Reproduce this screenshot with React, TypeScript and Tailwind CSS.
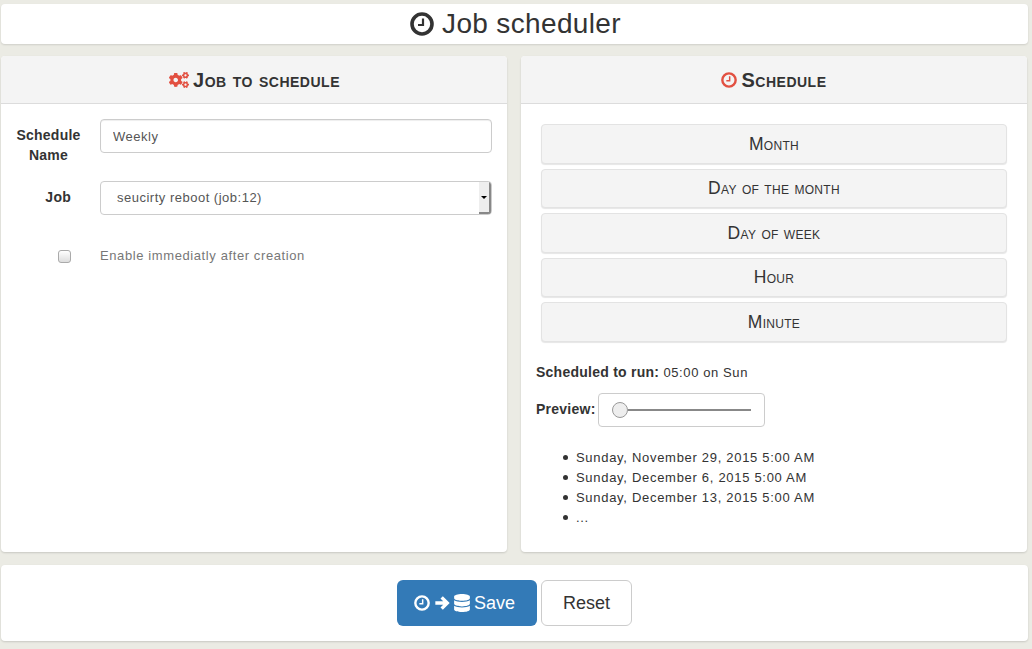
import { FaCogs, FaDatabase } from 'react-icons/fa';

const FONT = "font-['Liberation_Sans',Arial,sans-serif]";

const scheduleFields = ['Month', 'Day of the month', 'Day of week', 'Hour', 'Minute'];

const previewDates = [
  'Sunday, November 29, 2015 5:00 AM',
  'Sunday, December 6, 2015 5:00 AM',
  'Sunday, December 13, 2015 5:00 AM',
  '...',
];

function ClockIcon({ className }: { className?: string }) {
  return (
    <svg viewBox="0 0 24 24" className={className} fill="none" stroke="currentColor" aria-hidden>
      <circle cx="12" cy="12" r="10" strokeWidth="3.6" />
      <path d="M13 6.5V13H8" strokeWidth="2.2" />
    </svg>
  );
}

function ArrowIcon({ className }: { className?: string }) {
  return (
    <svg viewBox="0 0 24 24" className={className} fill="none" stroke="currentColor" aria-hidden>
      <path d="M2 12H20M11.5 3.5L20 12L11.5 20.5" strokeWidth="5" />
    </svg>
  );
}

function PanelHeader({ icon, title }: { icon: React.ReactNode; title: string }) {
  return (
    <div className="flex h-[48px] items-center justify-center gap-[4px] rounded-t-[4px] border-b border-[#dcdcdc] bg-[#f4f4f4] text-[20px] font-bold text-[#333] [font-variant-caps:small-caps]">
      {icon}
      <span>{title}</span>
    </div>
  );
}

export default function App() {
  return (
    <div
      className={`${FONT} h-[649px] w-[1032px] overflow-hidden bg-[#ebebe4] pt-[4px] pr-[4px] pl-[1px] text-[13px] tracking-[0.5px] text-[#333]`}
    >
      <div className="flex h-[40px] items-center justify-center gap-[8px] rounded-[4px] bg-white pl-[2px] text-[28px] font-normal tracking-[0.35px] shadow-[0_1px_2px_rgba(0,0,0,0.12)]">
        <ClockIcon className="h-[24px] w-[24px] text-[#333]" />
        <span>Job scheduler</span>
      </div>

      <div className="mt-[12px] flex h-[496px] gap-[14px]">
        <section className="flex w-[506px] flex-col rounded-[4px] bg-white shadow-[0_1px_2px_rgba(0,0,0,0.15)]">
          <PanelHeader
            icon={<FaCogs className="ml-[1px] h-[20px] w-[20px] text-[#e25041]" />}
            title="Job to schedule"
          />
          <div className="flex gap-[12px] pt-[15px] pl-[8px]">
            <label className="w-[79px] pt-[6px] text-center text-[14px] leading-[20px] font-bold tracking-[0.25px]">
              <span className="block">Schedule</span>
              <span className="block">Name</span>
            </label>
            <input
              readOnly
              value="Weekly"
              className="h-[34px] w-[392px] rounded-[4px] border border-[#ccc] px-[12px] text-[13px] text-[#555] shadow-[inset_0_1px_1px_rgba(0,0,0,0.07)] outline-none"
            />
          </div>
          <div className="flex items-start gap-[20px] pt-[16px]">
            <label className="w-[70px] pt-[6px] text-right text-[14px] leading-[20px] font-bold tracking-[0.25px]">
              Job
            </label>
            <div className="ml-[9px] flex h-[34px] w-[392px] items-center overflow-hidden rounded-[4px] border border-[#ccc] pl-[16px] text-[13px] text-[#555]">
              <span className="flex-1">seucirty reboot (job:12)</span>
              <span className="flex h-full w-[12px] items-center justify-center border-r-2 border-b-2 border-[#888] bg-[#eee]">
                <span className="h-0 w-0 border-x-[3px] border-t-[3px] border-x-transparent border-t-black" />
              </span>
            </div>
          </div>
          <div className="flex items-center gap-[29px] pt-[31px] pl-[57px]">
            <input
              type="checkbox"
              readOnly
              className="h-[13px] w-[13px] appearance-none rounded-[3px] border border-[#aaa] bg-[linear-gradient(#fff,#ddd)]"
            />
            <span className="text-[13px] leading-[20px] tracking-[0.6px] text-[#777]">
              Enable immediatly after creation
            </span>
          </div>
        </section>

        <section className="flex w-[506px] flex-col rounded-[4px] bg-white shadow-[0_1px_2px_rgba(0,0,0,0.15)]">
          <PanelHeader
            icon={<ClockIcon className="h-[16px] w-[16px] text-[#e25041]" />}
            title="Schedule"
          />
          <div className="flex flex-col gap-[5px] px-[20px] pt-[20px]">
            {scheduleFields.map((field) => (
              <div
                key={field}
                className="flex h-[39.5px] items-center justify-center rounded-[4px] border border-[#e3e3e3] bg-[#f4f4f4] text-[17.5px] tracking-[0.3px] text-[#333] shadow-[0_1px_1px_rgba(0,0,0,0.1)] [font-variant-caps:small-caps]"
              >
                {field}
              </div>
            ))}
          </div>
          <p className="mt-[20px] pl-[15px] text-[13px] leading-[20px] tracking-[0.6px]">
            <b className="text-[14px] tracking-[0.25px]">Scheduled to run:</b> 05:00 on Sun
          </p>
          <div className="mt-[10px] flex items-center gap-[2px] pl-[15px]">
            <b className="text-[14px] tracking-[0.25px]">Preview:</b>
            <div className="flex h-[34px] w-[167px] items-center rounded-[4px] border border-[#ccc] px-[13px]">
              <span className="h-[16px] w-[16px] shrink-0 rounded-full border border-[#999] bg-[#eee]" />
              <span className="h-[2px] flex-1 bg-[#888]" />
            </div>
          </div>
          <ul className="mt-[21px] pl-[42px] text-[13px] leading-[20px] tracking-[0.7px]">
            {previewDates.map((date) => (
              <li key={date} className="flex items-center gap-[8px]">
                <span className="h-[5px] w-[5px] rounded-full bg-[#333]" />
                <span>{date}</span>
              </li>
            ))}
          </ul>
        </section>
      </div>

      <div className="mt-[13px] flex h-[76px] items-center justify-center gap-[4px] rounded-[4px] bg-white shadow-[0_1px_2px_rgba(0,0,0,0.15)]">
        <button
          type="button"
          className="flex h-[46px] w-[140px] items-center justify-center gap-[4px] rounded-[6px] bg-[#337ab7] pr-[5px] text-[18px] tracking-normal text-white"
        >
          <ClockIcon className="h-[16px] w-[16px]" />
          <ArrowIcon className="h-[16px] w-[16px]" />
          <FaDatabase className="h-[18px] w-[16px]" />
          <span>Save</span>
        </button>
        <button
          type="button"
          className="h-[46px] w-[91px] rounded-[6px] border border-[#ccc] bg-white text-[18px] tracking-normal text-[#333]"
        >
          Reset
        </button>
      </div>
    </div>
  );
}
